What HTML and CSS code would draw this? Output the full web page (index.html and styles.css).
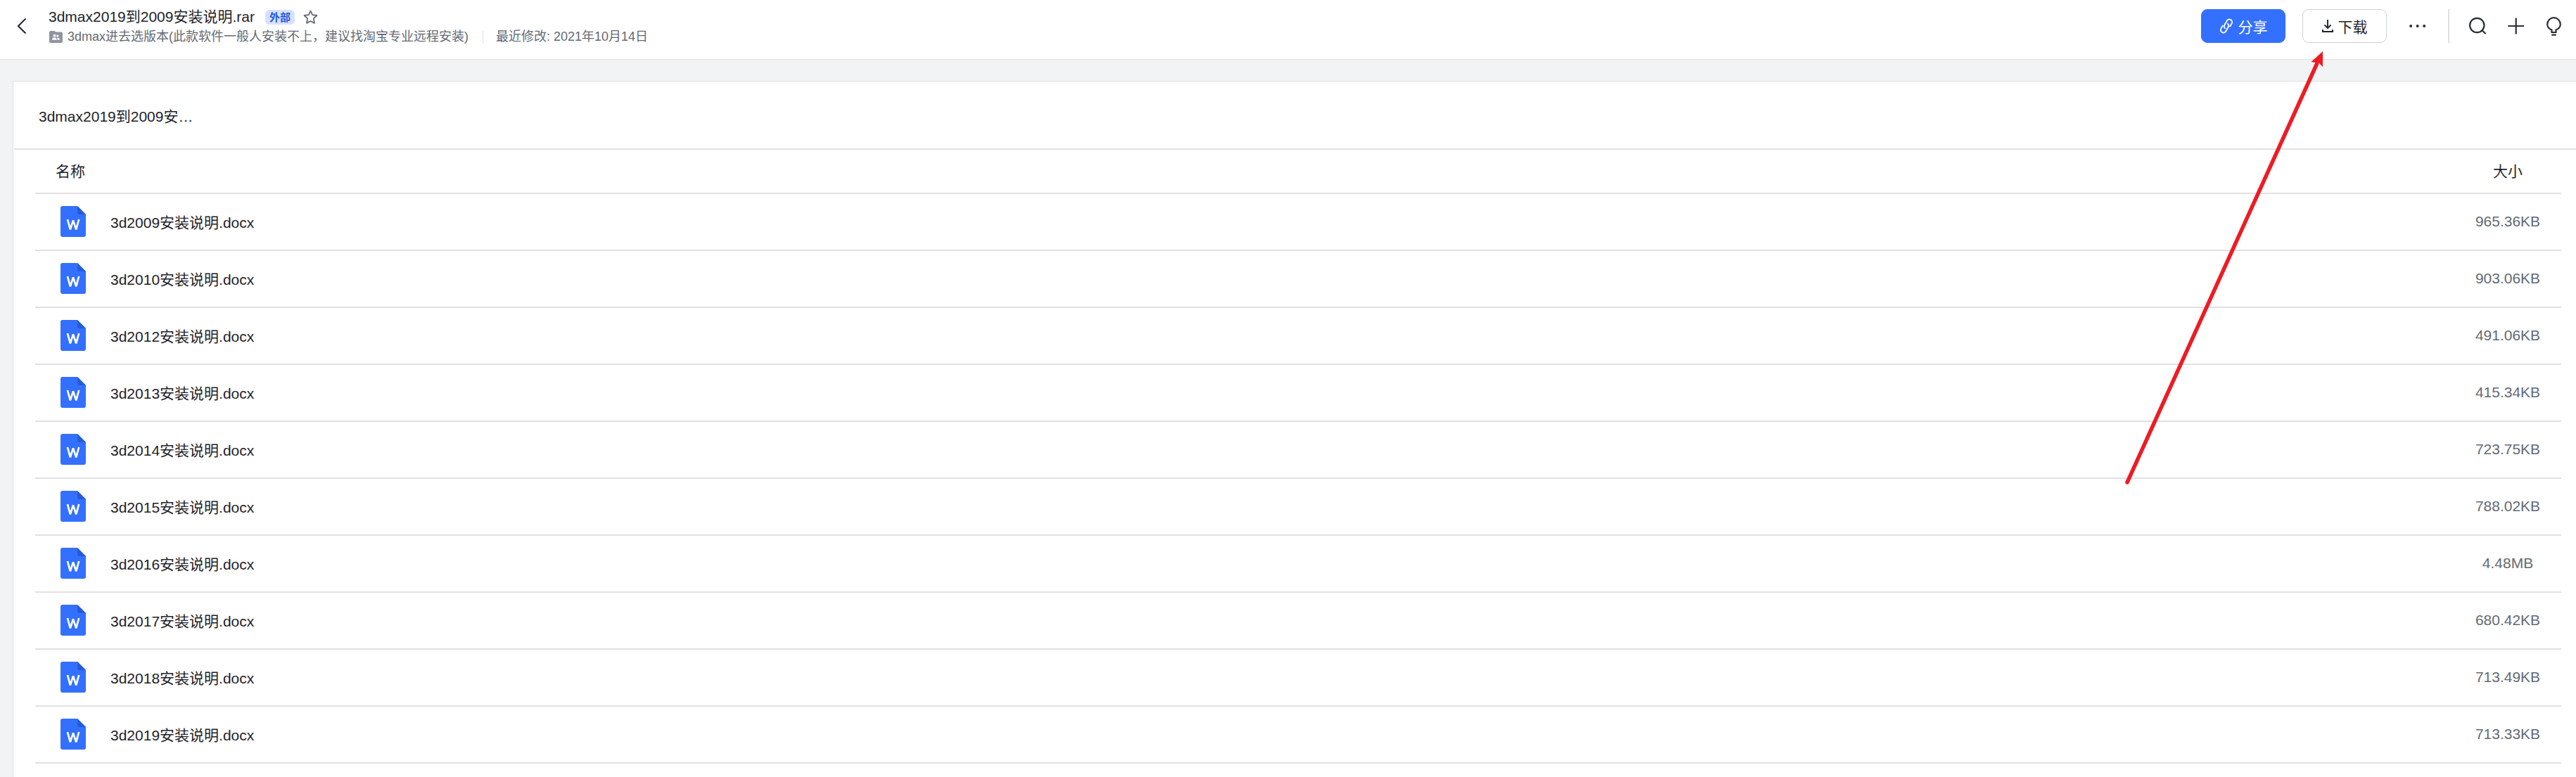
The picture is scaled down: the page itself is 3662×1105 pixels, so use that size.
FILE: index.html
```html
<!DOCTYPE html>
<html lang="zh-CN">
<head>
  <meta charset="UTF-8" />
  <meta name="viewport" content="width=device-width, initial-scale=1.0"/>
  <title>3dmax2019到2009安装说明.rar</title>
  <link rel="stylesheet" href="styles.css">
</head>
<body>

  <header>
    <svg class="back" width="14" height="24" viewBox="0 0 14 24"><path d="M12.5 1.5L2 12l10.5 10.5"/></svg>
    <div class="doc">
      <div class="doc-title">
        <span class="doc-name">3dmax2019到2009安装说明.rar</span>
        <span class="badge">外部</span>
        <svg class="star" width="21" height="21" viewBox="0 0 21 21"><path d="M10.500 1.500l2.600 5.700 6.400.8-4.700 4.300 1.200 6.600-5.500-2.900L5 18.900l1.200-6.600L1.500 8l6.400-.8z"/></svg>
      </div>
      <div class="doc-info">
        <svg class="folder" width="19" height="17" viewBox="0 0 19 17">
          <path class="folder-bg" d="M2 0h5.500l2 1.500H17a2 2 0 0 1 2 2V15a2 2 0 0 1-2 2H2a2 2 0 0 1-2-2V2a2 2 0 0 1 2-2z"/>
          <circle cx="7.500" cy="6.700" r="1.900"/><circle cx="11.800" cy="7" r="1.600"/>
          <path d="M4 12.800c0-4.600 6.800-4.600 6.800 0zM11.800 12.800c0-1.300-.4-2.200-1-2.800 1.800-.8 4.200 0 4.200 2.800z"/>
        </svg>
        <span>3dmax进去选版本(此款软件一般人安装不上，建议找淘宝专业远程安装)</span>
        <span class="divider"></span>
        <span>最近修改: 2021年10月14日</span>
      </div>
    </div>
    <div class="actions">
      <button class="btn primary">
        <svg width="20" height="22" viewBox="0 0 20 22"><path d="M8.700 14.700c-2-1-2.500-3.400-1.300-5.300l3.400-5.900a3.900 3.900 0 0 1 6.800 3.900l-2.700 4.500M11.300 7.300c2 1 2.500 3.400 1.300 5.300l-3.400 5.900a3.900 3.900 0 0 1-6.800-3.900l2.700-4.500"/></svg>
        分享
      </button>
      <button class="btn">
        <svg width="16" height="18" viewBox="0 0 16 18"><path d="M8 0v12M3.500 7.500L8 12l4.500-4.500M1 14v3h14v-3"/></svg>
        下载
      </button>
      <svg class="more" width="24" height="6" viewBox="0 0 24 6"><circle cx="2.200" cy="3" r="2"/><circle cx="11.700" cy="3" r="2"/><circle cx="21.200" cy="3" r="2"/></svg>
      <span class="split"></span>
      <svg class="tool" width="25" height="26" viewBox="0 0 25 26"><circle cx="11.300" cy="12" r="10.200"/><path d="M17.800 18.500l5.700 5.500"/></svg>
      <svg class="tool plus" width="24" height="26" viewBox="0 0 24 26"><path d="M11.700 1.500v23M.3 13h22.800"/></svg>
      <svg class="tool bulb" width="21" height="27" viewBox="0 0 21 27"><path d="M7.500 22v-3.500C3.200 16.800 1.200 14.300 1.200 10.500a9.300 9.300 0 0 1 18.600 0c0 3.800-2 6.300-6.300 8V22zM7.300 25.600h6.400"/></svg>
    </div>
  </header>

  <main>
    <div class="card-title">3dmax2019到2009安…</div>
    <div class="files" id="files">
      <div class="row head">
        <div class="name">名称</div>
        <div class="size">大小</div>
      </div>
    </div>
  </main>

  <svg class="arrow" width="290" height="620" viewBox="0 0 290 620">
    <path class="shaft" d="M4 616L273.500 21"/>
    <path class="tip" d="M282 3v22l-5-5-11.500-2z"/>
  </svg>

  <script>
    const files = [
      { name: '3d2009安装说明.docx', size: '965.36KB' },
      { name: '3d2010安装说明.docx', size: '903.06KB' },
      { name: '3d2012安装说明.docx', size: '491.06KB' },
      { name: '3d2013安装说明.docx', size: '415.34KB' },
      { name: '3d2014安装说明.docx', size: '723.75KB' },
      { name: '3d2015安装说明.docx', size: '788.02KB' },
      { name: '3d2016安装说明.docx', size: '4.48MB' },
      { name: '3d2017安装说明.docx', size: '680.42KB' },
      { name: '3d2018安装说明.docx', size: '713.49KB' },
      { name: '3d2019安装说明.docx', size: '713.33KB' }
    ];

    const list = document.getElementById('files');
    files.forEach(file => {
      const row = document.createElement('div');
      row.className = 'row';
      row.innerHTML = `
        <svg class="icon" width="36" height="44" viewBox="0 0 36 44">
          <path fill="#3370ff" d="M3 0h21l12 12v29a3 3 0 0 1-3 3H3a3 3 0 0 1-3-3V3a3 3 0 0 1 3-3z"/>
          <path fill="#245bdb" d="M24 0l12 12h-9a3 3 0 0 1-3-3z"/>
          <path fill="none" stroke="#fff" stroke-width="2.700" stroke-linejoin="bevel" d="M10 19l3.900 14.300L18 20.300l4.200 13L26.200 19"/>
        </svg>
        <div class="name">${file.name}</div>
        <div class="size">${file.size}</div>
      `;
      list.appendChild(row);
    });
  </script>

</body>
</html>
```
FILE: styles.css
```css
body {
  margin: 0;
  height: 1105px;
  overflow: hidden;
  position: relative;
  display: flex;
  flex-direction: column;
  background-color: #f2f3f5;
  color: #1f2329;
  font-family: "Liberation Sans", "Noto Sans CJK SC", sans-serif;
  font-size: 21px;
}
svg {
  display: block;
  flex: none;
}
header {
  box-sizing: border-box;
  height: 85px;
  flex: none;
  display: flex;
  align-items: flex-start;
  padding-left: 24px;
  background-color: #fff;
  border-bottom: 1px solid #dee0e3;
  white-space: nowrap;
}
.back {
  margin-top: 25px;
  fill: none;
  stroke: #2b2f36;
  stroke-width: 2.2;
}
.doc {
  margin: 8px 0 0 31px;
}
.doc-title {
  display: flex;
  align-items: center;
  height: 32px;
  line-height: 32px;
}
.badge {
  width: 42px;
  height: 21px;
  margin: 1px 12px 0 15px;
  border-radius: 6px;
  background-color: #d6e1ff;
  color: #245bdb;
  font-size: 15px;
  font-weight: bold;
  line-height: 21px;
  text-align: center;
}
.star {
  margin-top: 1px;
  fill: none;
  stroke: #646a73;
  stroke-width: 1.8;
  stroke-linejoin: round;
}
.doc-info {
  display: flex;
  align-items: center;
  height: 24px;
  color: #646a73;
  font-size: 18px;
  line-height: 24px;
}
.folder {
  margin: 0 7px 0 1px;
  fill: #fff;
}
.folder-bg {
  fill: #8f959e;
}
.divider {
  width: 1px;
  height: 18px;
  margin: 2px 18px 0 20px;
  background-color: #dee0e3;
}
.actions {
  display: flex;
  align-items: center;
  height: 48px;
  margin: 13px 21px 0 auto;
}
.btn {
  box-sizing: border-box;
  width: 120px;
  height: 48px;
  margin-right: 24px;
  padding: 0;
  display: flex;
  align-items: center;
  justify-content: center;
  gap: 7px;
  border: 1px solid #d0d3d6;
  border-radius: 9px;
  background-color: #fff;
  color: #1f2329;
  font: inherit;
}
.btn.primary {
  border-color: #3370ff;
  background-color: #3370ff;
  color: #fff;
}
.btn svg {
  fill: none;
  stroke: currentColor;
  stroke-width: 1.9;
}
.more {
  margin-left: 8px;
  fill: #2b2f36;
}
.split {
  width: 2px;
  height: 48px;
  margin: 0 28px 0 31px;
  background-color: #dee0e3;
}
.tool {
  fill: none;
  stroke: #2b2f36;
  stroke-width: 2.2;
}
.plus {
  margin-left: 30px;
}
.bulb {
  margin-left: 31px;
}
main {
  flex: 1;
  margin: 30px 0 0 18px;
  padding-left: 1px;
  border-top: 1px solid #dee0e3;
  border-left: 1px solid #dee0e3;
  background-color: #fff;
}
.card-title {
  height: 95px;
  padding-left: 35px;
  border-bottom: 2px solid #e1e1e2;
  line-height: 99px;
}
.files {
  margin: 0 21px 0 30px;
}
.row {
  display: flex;
  height: 79px;
  border-bottom: 2px solid #e1e1e2;
  line-height: 77px;
}
.row .icon {
  margin: 17px 35px 0 36px;
}
.row .name {
  flex: 1;
  padding-top: 2px;
}
.row .size {
  width: 152px;
  color: #646a73;
  text-align: center;
}
.row.head {
  height: 61px;
  line-height: 61px;
}
.head .name {
  padding: 0 0 0 29px;
}
.head .size {
  color: #1f2329;
}
.arrow {
  position: absolute;
  left: 3020px;
  top: 70px;
}
.shaft {
  fill: none;
  stroke: #ed1c24;
  stroke-width: 5.5;
  stroke-linecap: round;
}
.tip {
  fill: #ed1c24;
}
```
